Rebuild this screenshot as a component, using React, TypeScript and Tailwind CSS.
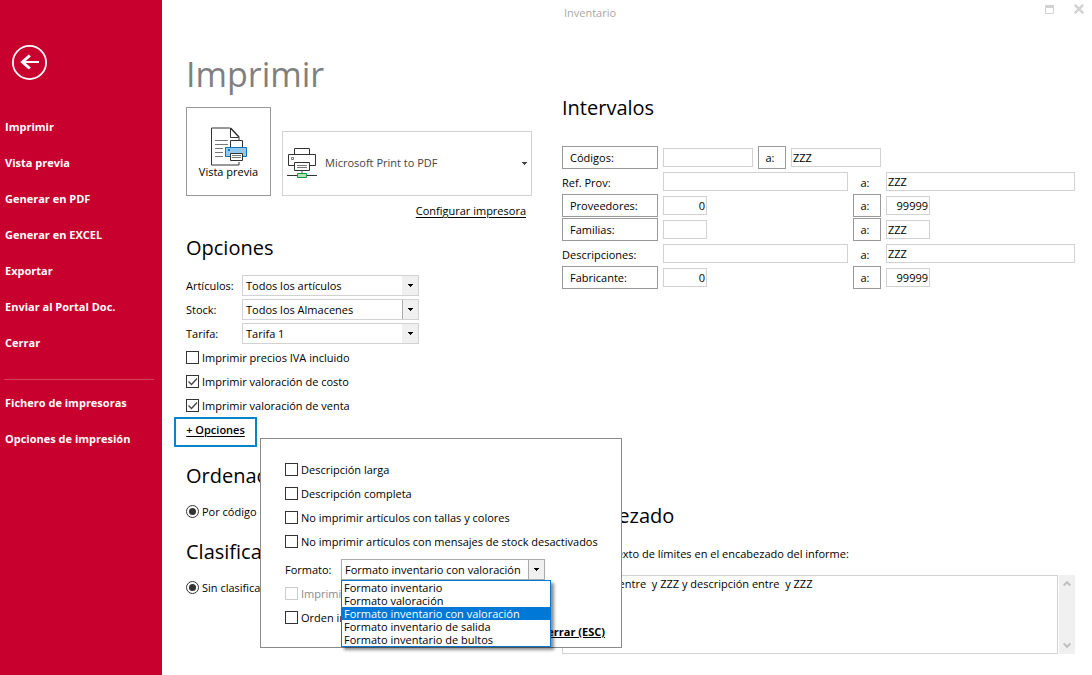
import { useState } from "react";
import type { ReactNode } from "react";

const menuItems = ["Imprimir", "Vista previa", "Generar en PDF", "Generar en EXCEL", "Exportar", "Enviar al Portal Doc.", "Cerrar"];
const setupItems = ["Fichero de impresoras", "Opciones de impresión"];

const formats = [
    "Formato inventario",
    "Formato valoración",
    "Formato inventario con valoración",
    "Formato inventario de salida",
    "Formato inventario de bultos",
];

function MenuButton({ label }: { label: string }) {
    return (
        <li>
            <button className="w-full h-9 pb-0.5 pl-[5px] text-left font-bold text-white hover:bg-white/10">{label}</button>
        </li>
    );
}

function Sidebar() {
    return (
        <nav className="w-[162px] shrink-0 bg-[#c8002d] pt-[45px]">
            <button aria-label="Volver" className="ml-3 block">
                <svg width="35" height="35" viewBox="0 0 35 35" fill="none" stroke="white">
                    <circle cx="17.5" cy="17.5" r="16.600" strokeWidth="1.800" />
                    <path d="M10.500 17H27" strokeWidth="2" />
                    <path d="M17.800 10.500L10.500 17l7.300 6.500" strokeWidth="3" />
                </svg>
            </button>
            <ul className="mt-[30px]">
                {menuItems.map((label) => <MenuButton key={label} label={label} />)}
            </ul>
            <hr className="mt-[17px] mb-1.5 ml-1 mr-2 border-[#d9405f]" />
            <ul>
                {setupItems.map((label) => <MenuButton key={label} label={label} />)}
            </ul>
        </nav>
    );
}

function TitleBar() {
    return (
        <header className="flex h-6 items-center">
            <p className="flex-1 pt-0.5 text-center text-[#a8a8a8]">Inventario</p>
            <div className="flex w-[74px] items-center gap-5 self-start pl-[26px] pt-1">
                <button aria-label="Maximizar">
                    <svg className="block" width="10" height="10" viewBox="0 0 10 10" fill="none" stroke="#d2d2d2">
                        <path d="M1.500 1.500h8v8h-8z" />
                        <path d="M1 2.500h9" strokeWidth="3" />
                    </svg>
                </button>
                <button aria-label="Cerrar ventana">
                    <svg className="block" width="10" height="10" viewBox="0 0 10 10" stroke="#d2d2d2" strokeWidth="2.400">
                        <path d="M.7 .7l8.600 8.600M9.300 .7L.7 9.300" />
                    </svg>
                </button>
            </div>
        </header>
    );
}

function PreviewIcon() {
    return (
        <svg width="36" height="39" viewBox="0 0 36 39" fill="none">
            <path d="M28 13V10L19 1H.5v37H28v-3" fill="white" stroke="#333" />
            <path d="M19.5 1v9.500h8" stroke="#333" />
            <path d="M19.500 1l8.500 9" stroke="#333" strokeWidth="1.500" />
            <path d="M4 13.500h13M4 17.500h13M4 21.500h8M4 25.500h8M4 29.500h8" stroke="#777" />
            <path d="M19.500 13.500h12v8h-12z" fill="white" stroke="#333" />
            <path d="M14.500 20.500h21v9h-21z" fill="#92c8ee" stroke="#1272b8" />
            <path d="M17 22h2v2h-2z" fill="#1272b8" />
            <path d="M19.500 26.500h12v7h-12z" fill="white" stroke="#333" />
            <path d="M21 28.500h9M21 30.500h9" stroke="#777" />
        </svg>
    );
}

function PrinterIcon() {
    return (
        <svg width="30" height="31" viewBox="0 0 30 31" fill="none">
            <path d="M7.500 6.500v-6h15v6" fill="white" stroke="#333" />
            <path d="M7 17.500H1.500v-11h27v11H23" stroke="#333" />
            <path d="M4.500 9.500h2v2h-2z" stroke="#777" />
            <path d="M7.500 14.500h15v8h-15z" fill="white" stroke="#333" />
            <path d="M10 17.500h10M10 19.500h10" stroke="#777" />
            <path d="M15 23v2" stroke="#aaa" strokeWidth="2" />
            <path d="M0 27.500h30" stroke="#333" />
            <path d="M10.500 25.500h9v4h-9z" fill="#b5deb9" stroke="#0f9a3c" />
        </svg>
    );
}

function Arrow() {
    return (
        <svg width="5" height="3" viewBox="0 0 5 3" shapeRendering="crispEdges">
            <path d="M0 0h5L2.500 3z" fill="currentColor" />
        </svg>
    );
}

function Check({ label, checked = false, disabled = false }: { label: string; checked?: boolean; disabled?: boolean }) {
    return (
        <label className={`flex h-6 items-center gap-[3px] whitespace-nowrap ${disabled ? "text-[#8a8a8a]" : ""}`}>
            <span className="grid">
                <input
                    type="checkbox"
                    defaultChecked={checked}
                    disabled={disabled}
                    className="peer col-start-1 row-start-1 size-[13px] appearance-none border border-[#333] bg-white disabled:border-[#ccc]"
                />
                <svg className="pointer-events-none invisible col-start-1 row-start-1 peer-checked:visible" width="13" height="13" viewBox="0 0 13 13" fill="none">
                    <path d="M2.500 6.500l3 3 5.500-6" stroke="#444" strokeWidth="1.300" />
                </svg>
            </span>
            <span className="pt-0.5">{label}</span>
        </label>
    );
}

function Radio({ label, name }: { label: string; name: string }) {
    return (
        <label className="flex h-6 items-center gap-[3px] whitespace-nowrap">
            <span className="grid place-items-center">
                <input type="radio" name={name} defaultChecked className="peer col-start-1 row-start-1 size-[13px] appearance-none rounded-full border border-[#333] bg-white" />
                <span className="pointer-events-none invisible col-start-1 row-start-1 size-[7px] rounded-full bg-[#333] peer-checked:visible" />
            </span>
            <span className="pt-0.5">{label}</span>
        </label>
    );
}

function SelectRow({ label, value, split = false }: { label: string; value: string; split?: boolean }) {
    return (
        <label className="flex h-6 items-center">
            <span className="w-14 pt-0.5">{label}</span>
            <span className="grid w-[177px]">
                <select className="col-start-1 row-start-1 h-[21px] appearance-none border border-[#d2d2d2] bg-white pl-[3px] pt-0.5">
                    <option>{value}</option>
                </select>
                <span className={`pointer-events-none col-start-1 row-start-1 my-px mr-px flex w-4 items-center justify-center justify-self-end bg-[#f0f0f0] ${split ? "border-l border-[#aaa]" : ""}`}>
                    <Arrow />
                </span>
            </span>
        </label>
    );
}

function Heading({ children }: { children: ReactNode }) {
    return <h2 className="h-8 text-xl leading-8">{children}</h2>;
}

function OptionsPopup() {
    const [format, setFormat] = useState(formats[2]);

    return (
        <div className="absolute left-[86px] top-[21px] z-10 w-[362px] border border-[#8a8a8a] bg-white pt-[18px] pr-4 pb-[3px] pl-6">
            <Check label="Descripción larga" />
            <Check label="Descripción completa" />
            <Check label="No imprimir artículos con tallas y colores" />
            <Check label="No imprimir artículos con mensajes de stock desactivados" />
            <div className="relative mt-1 flex h-6 items-center">
                <label htmlFor="formato" className="w-14 pt-0.5">Formato:</label>
                <span className="grid w-[204px]">
                    <select
                        id="formato"
                        value={format}
                        onChange={(e) => setFormat(e.target.value)}
                        className="col-start-1 row-start-1 h-[21px] appearance-none border border-[#aaa] bg-white pl-[3px] pt-0.5"
                    >
                        {formats.map((item) => <option key={item}>{item}</option>)}
                    </select>
                    <span className="pointer-events-none col-start-1 row-start-1 my-px mr-px flex w-4 items-center justify-center justify-self-end border-l border-[#aaa] bg-[#f0f0f0]">
                        <Arrow />
                    </span>
                </span>
                <ul role="listbox" aria-label="Formato" className="absolute left-14 top-[23px] z-10 w-[210px] border border-[#0078d7] bg-white shadow-[3px_3px_3px_rgba(0,0,0,0.45)]">
                    {formats.map((item) => (
                        <li
                            key={item}
                            role="option"
                            aria-selected={item === format}
                            onClick={() => setFormat(item)}
                            className={`h-[13px] pl-0.5 leading-[13px] ${item === format ? "bg-[#0078d7] text-white" : ""}`}
                        >
                            {item}
                        </li>
                    ))}
                </ul>
            </div>
            <Check label="Imprimir" disabled />
            <Check label="Orden inverso" />
            <div className="-mt-[9px] flex justify-end">
                <button className="h-6 font-bold underline">Cerrar (ESC)</button>
            </div>
        </div>
    );
}

function PrintColumn() {
    return (
        <section className="w-[346px] shrink-0">
            <h1 className="h-[83px] pt-[26px] text-[34px] leading-[48px] text-[#808080]">Imprimir</h1>
            <div className="flex items-end gap-[11px]">
                <button className="flex h-[89px] w-[85px] flex-col items-center border border-[#999] pt-[19px]">
                    <PreviewIcon />
                    <span className="leading-3">Vista previa</span>
                </button>
                <button className="flex h-[65px] flex-1 items-center border border-[#d2d2d2] px-1 text-[#444]">
                    <PrinterIcon />
                    <span className="ml-2 flex-1 text-left">Microsoft Print to PDF</span>
                    <Arrow />
                </button>
            </div>
            <div className="flex h-9 items-start justify-end pr-1.5 pt-[7px]">
                <a href="#configurar" className="underline underline-offset-2">Configurar impresora</a>
            </div>

            <Heading>Opciones</Heading>
            <div className="mt-[9px]">
                <SelectRow label="Artículos:" value="Todos los artículos" />
                <SelectRow label="Stock:" value="Todos los Almacenes" split />
                <SelectRow label="Tarifa:" value="Tarifa 1" />
                <Check label="Imprimir precios IVA incluido" />
                <Check label="Imprimir valoración de costo" checked />
                <Check label="Imprimir valoración de venta" checked />
            </div>
            <div className="relative -ml-3 flex">
                <button className="h-[30px] w-[83px] border-2 border-[#0a84c8] pb-1 font-semibold underline underline-offset-2">+ Opciones</button>
                <OptionsPopup />
            </div>

            <div className="mt-[13px]">
                <Heading>Ordenación</Heading>
                <div className="mt-[7px]">
                    <Radio name="orden" label="Por código" />
                </div>
            </div>
            <div className="mt-[13px]">
                <Heading>Clasificación</Heading>
                <div className="mt-[7px]">
                    <Radio name="clasificacion" label="Sin clasificar" />
                </div>
            </div>
        </section>
    );
}

function Field({ label, value = "", className }: { label: string; value?: string; className: string }) {
    return <input aria-label={label} defaultValue={value} className={`h-[19px] min-w-0 border border-[#d2d2d2] px-px ${className}`} />;
}

function RangeButton({ children, className }: { children: ReactNode; className: string }) {
    return <button className={`h-[23px] border border-[#999] pt-0.5 ${className}`}>{children}</button>;
}

interface Range {
    name: string;
    boxed: boolean;
    from: string;
    to: string;
}

const ranges: Range[] = [
    { name: "Ref. Prov:", boxed: false, from: "", to: "ZZZ" },
    { name: "Proveedores:", boxed: true, from: "0", to: "99999" },
    { name: "Familias:", boxed: true, from: "", to: "ZZZ" },
    { name: "Descripciones:", boxed: false, from: "", to: "ZZZ" },
    { name: "Fabricante:", boxed: true, from: "0", to: "99999" },
];

function RangeRow({ range }: { range: Range }) {
    const size = range.boxed ? "w-11" : "w-full";
    const align = range.from === "0" ? "text-right" : "";

    return (
        <div className="grid h-6 grid-cols-[96px_minmax(0,185fr)_28px_minmax(0,189fr)] items-center gap-x-[5px]">
            {range.boxed
                ? <RangeButton className="pl-[7px] text-left">{range.name}</RangeButton>
                : <span className="pt-1">{range.name}</span>}
            <Field label={`${range.name} desde`} value={range.from} className={`${size} ${align}`} />
            {range.boxed
                ? <RangeButton className="pr-1">a:</RangeButton>
                : <span className="pr-1 pt-1 text-center">a:</span>}
            <Field label={`${range.name} hasta`} value={range.to} className={`${size} ${align}`} />
        </div>
    );
}

function RangeColumn() {
    return (
        <section className="min-w-0 flex-1 pt-[68px]">
            <Heading>Intervalos</Heading>
            <div className="mt-[21px]">
                <div className="flex h-6 items-center gap-[5px]">
                    <RangeButton className="w-24 pl-[7px] text-left">Códigos:</RangeButton>
                    <Field label="Códigos desde" className="w-[90px]" />
                    <RangeButton className="w-7 pr-1">a:</RangeButton>
                    <Field label="Códigos hasta" value="ZZZ" className="w-[90px]" />
                </div>
                {ranges.map((range) => <RangeRow key={range.name} range={range} />)}
            </div>

            <div className="mt-[211px]">
                <Heading>Encabezado</Heading>
                <div className="mt-[9px]">
                    <Check label="Incluir texto de límites en el encabezado del informe:" checked />
                </div>
                <div className="mt-[10px] flex h-[79px] gap-px">
                    <textarea
                        aria-label="Texto del encabezado"
                        className="min-w-0 flex-1 resize-none overflow-hidden border border-[#d2d2d2] px-[5px] leading-4"
                        defaultValue="Artículos: entre  y ZZZ y descripción entre  y ZZZ"
                    />
                    <div className="flex w-4 flex-col items-center justify-between bg-[#f0f0f0] py-[5px]">
                        <button aria-label="Subir">
                            <svg className="block" width="8" height="7" viewBox="0 0 8 7" fill="none" stroke="#bfbfbf" strokeWidth="2">
                                <path d="M.7 5.500L4 2.200l3.300 3.300" />
                            </svg>
                        </button>
                        <button aria-label="Bajar">
                            <svg className="block" width="8" height="7" viewBox="0 0 8 7" fill="none" stroke="#bfbfbf" strokeWidth="2">
                                <path d="M.7 1.500L4 4.800l3.300-3.300" />
                            </svg>
                        </button>
                    </div>
                </div>
            </div>
        </section>
    );
}

function App() {
    return (
        <div className="flex min-h-screen bg-white font-['Open_Sans','Noto_Sans',sans-serif] text-[11px] text-black">
            <Sidebar />
            <div className="min-w-0 flex-1">
                <TitleBar />
                <main className="flex gap-[30px] pl-6 pr-[17px]">
                    <PrintColumn />
                    <RangeColumn />
                </main>
            </div>
        </div>
    );
}

export default App;
